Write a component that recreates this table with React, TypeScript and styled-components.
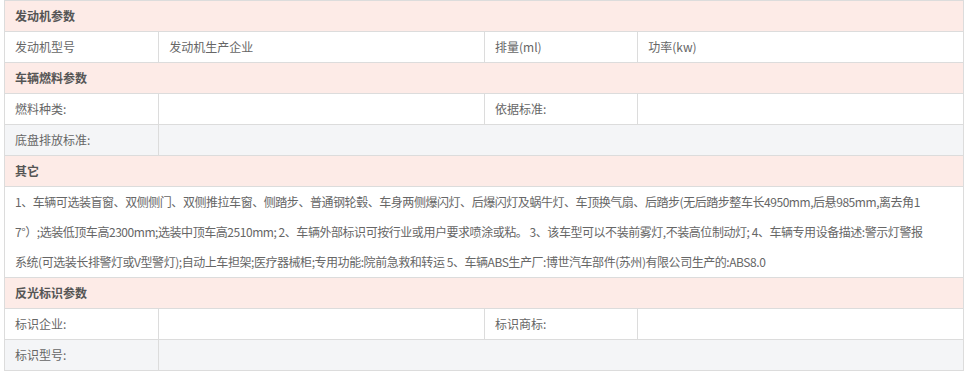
import React from 'react';
import styled, { createGlobalStyle } from 'styled-components';

const GlobalStyle = createGlobalStyle`
  html, body {
    margin: 0;
    padding: 0;
    background: #fff;
  }
  body {
    font-family: "SimSun", "Noto Sans CJK SC", sans-serif;
    font-size: 12px;
    color: #666;
    overflow: hidden;
  }
`;

/* ── layout ── */

const Page = styled.div`
  width: 960px;
  padding: 0 3px 0 4px;
  margin-top: -30px;
`;

const Table = styled.div`
  border-left: 1px solid #dcdcdc;
  border-right: 1px solid #dcdcdc;
`;

const Row = styled.div<{ $grey?: boolean; $cols?: string }>`
  display: grid;
  grid-template-columns: ${(p) => p.$cols || '16% 34% 16% 34%'};
  height: 30px;
  border-bottom: 1px solid #dcdcdc;
  background: ${(p) => (p.$grey ? '#f4f5f7' : '#fff')};
`;

const Cell = styled.div`
  display: flex;
  align-items: center;
  padding-left: 10px;
  line-height: 30px;
  white-space: nowrap;
  overflow: hidden;
  & + & {
    border-left: 1px solid #dcdcdc;
  }
`;

const Header = styled.div`
  height: 30px;
  line-height: 30px;
  padding-left: 10px;
  background: #fdebe7;
  border-bottom: 1px solid #dcdcdc;
  font-weight: 700;
  color: #555;
`;

const Notes = styled.div`
  padding: 0 10px;
  border-bottom: 1px solid #dcdcdc;
  background: #fff;
`;

const NoteLine = styled.div`
  height: 30px;
  line-height: 30px;
  white-space: nowrap;
  letter-spacing: -0.45px;
`;

/* ── data ── */

const notes = [
  '1、车辆可选装盲窗、双侧侧门、双侧推拉车窗、侧踏步、普通钢轮毂、车身两侧爆闪灯、后爆闪灯及蜗牛灯、车顶换气扇、后踏步(无后踏步整车长4950mm,后悬985mm,离去角1',
  '7°）;选装低顶车高2300mm;选装中顶车高2510mm; 2、车辆外部标识可按行业或用户要求喷涂或粘。 3、该车型可以不装前雾灯,不装高位制动灯; 4、车辆专用设备描述:警示灯警报',
  '系统(可选装长排警灯或V型警灯);自动上车担架;医疗器械柜;专用功能:院前急救和转运 5、车辆ABS生产厂:博世汽车部件(苏州)有限公司生产的:ABS8.0',
];

export default function App() {
  return (
    <>
      <GlobalStyle />
      <Page>
        <Table>
          {/* tail of the row above, scrolled out of view */}
          <Row>
            <Cell />
            <Cell />
            <Cell />
            <Cell />
          </Row>

          <Header>发动机参数</Header>
          <Row>
            <Cell>发动机型号</Cell>
            <Cell>发动机生产企业</Cell>
            <Cell>排量(ml)</Cell>
            <Cell>功率(kw)</Cell>
          </Row>

          <Header>车辆燃料参数</Header>
          <Row>
            <Cell>燃料种类:</Cell>
            <Cell />
            <Cell>依据标准:</Cell>
            <Cell />
          </Row>
          <Row $grey $cols="16% 84%">
            <Cell>底盘排放标准:</Cell>
            <Cell />
          </Row>

          <Header>其它</Header>
          <Notes>
            {notes.map((line, i) => (
              <NoteLine key={i}>{line}</NoteLine>
            ))}
          </Notes>

          <Header>反光标识参数</Header>
          <Row>
            <Cell>标识企业:</Cell>
            <Cell />
            <Cell>标识商标:</Cell>
            <Cell />
          </Row>
          <Row $grey $cols="16% 84%">
            <Cell>标识型号:</Cell>
            <Cell />
          </Row>
        </Table>
      </Page>
    </>
  );
}
